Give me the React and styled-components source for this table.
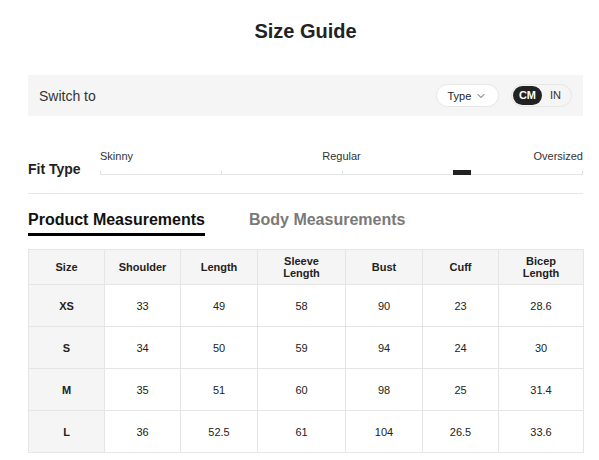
import React from 'react';
import styled, { createGlobalStyle } from 'styled-components';
import { ChevronDown } from 'lucide-react';

const GlobalStyle = createGlobalStyle`
  body {
    margin: 0;
    background: #fff;
    font-family: 'Liberation Sans', Arial, sans-serif;
    color: #222;
  }
`;

const Page = styled.div`
  width: 599px;
  box-sizing: border-box;
  padding: 0 16px 0 28px;
`;

const Title = styled.h2`
  margin: 0;
  padding-top: 19px;
  font-size: 20px;
  line-height: 24px;
  font-weight: 700;
  text-align: center;
  color: #222;
`;

const SwitchBar = styled.div`
  margin-top: 32px;
  height: 41px;
  background: #f5f5f5;
  display: flex;
  align-items: center;
  padding: 0 11px;
  gap: 12px;
`;

const SwitchLabel = styled.span`
  flex: 1;
  font-size: 14px;
  color: #333;
`;

const TypeButton = styled.button`
  height: 23px;
  width: 63px;
  box-sizing: border-box;
  border: 1px solid #e6e6e6;
  border-radius: 12px;
  background: #fff;
  display: flex;
  align-items: center;
  justify-content: center;
  gap: 4px;
  font-family: inherit;
  font-size: 11px;
  color: #222;
  padding: 0;
`;

const UnitToggle = styled.div`
  height: 23px;
  box-sizing: border-box;
  border: 1px solid #e6e6e6;
  border-radius: 12px;
  display: flex;
  align-items: center;
  padding: 0 10px 0 1px;
  gap: 8px;
`;

const Unit = styled.span`
  height: 19px;
  line-height: 19px;
  padding: 0 ${(p) => (p.active ? '6px' : '0')};
  border-radius: 10px;
  font-size: 11px;
  font-weight: ${(p) => (p.active ? 700 : 400)};
  background: ${(p) => (p.active ? '#222' : 'transparent')};
  color: ${(p) => (p.active ? '#fff' : '#333')};
`;

const FitSection = styled.div`
  display: flex;
  align-items: flex-end;
  padding: 34px 0 18px;
  border-bottom: 1px solid #e8e8e8;
`;

const FitLabel = styled.div`
  width: 72px;
  font-size: 14px;
  line-height: 16px;
  font-weight: 700;
  margin-bottom: -2px;
`;

const Slider = styled.div`
  flex: 1;
`;

const SliderLabels = styled.div`
  display: grid;
  grid-template-columns: 1fr 1fr 1fr;
  font-size: 11px;
  line-height: 13px;
  color: #333;

  span:nth-child(2) { text-align: center; }
  span:nth-child(3) { text-align: right; }
`;

const Track = styled.div`
  position: relative;
  height: 11px;
  border-bottom: 1px solid #e5e5e5;
`;

const Tick = styled.i`
  position: absolute;
  bottom: 0;
  width: 1px;
  height: 3px;
  background: #ddd;
`;

const Marker = styled.i`
  position: absolute;
  bottom: -1px;
  width: 18px;
  height: 5px;
  background: #222;
`;

const Tabs = styled.div`
  display: flex;
  gap: 44px;
  margin-top: 16px;
`;

const Tab = styled.div`
  font-size: 16px;
  line-height: 20px;
  font-weight: 700;
  padding-bottom: 3px;
  border-bottom: 3px solid ${(p) => (p.active ? '#000' : 'transparent')};
  color: ${(p) => (p.active ? '#111' : '#7a7a7a')};
`;

const Table = styled.table`
  margin-top: 13px;
  width: 555px;
  border-collapse: collapse;
  table-layout: fixed;
  font-size: 11px;
  text-align: center;
  color: #222;
`;

const Th = styled.th`
  height: 34px;
  padding: 0 4px;
  background: #f5f5f5;
  border: 1px solid #e5e5e5;
  font-weight: 700;
  line-height: 12px;
`;

const Td = styled.td`
  height: 41px;
  padding: 0;
  border: 1px solid #e5e5e5;
  background: ${(p) => (p.head ? '#f5f5f5' : '#fff')};
  font-weight: ${(p) => (p.head ? 700 : 400)};
`;

const columns = [
  { label: ['Size'], width: 76 },
  { label: ['Shoulder'], width: 76 },
  { label: ['Length'], width: 77 },
  { label: ['Sleeve', 'Length'], width: 88 },
  { label: ['Bust'], width: 77 },
  { label: ['Cuff'], width: 76 },
  { label: ['Bicep', 'Length'], width: 85 },
];

const rows = [
  ['XS', '33', '49', '58', '90', '23', '28.6'],
  ['S', '34', '50', '59', '94', '24', '30'],
  ['M', '35', '51', '60', '98', '25', '31.4'],
  ['L', '36', '52.5', '61', '104', '26.5', '33.6'],
];

const fitValue = 73;

const App = () => {
  return (
    <>
      <GlobalStyle />
      <Page>
        <Title>Size Guide</Title>

        <SwitchBar>
          <SwitchLabel>Switch to</SwitchLabel>
          <TypeButton>
            Type <ChevronDown size={12} strokeWidth={1.5} />
          </TypeButton>
          <UnitToggle>
            <Unit active>CM</Unit>
            <Unit>IN</Unit>
          </UnitToggle>
        </SwitchBar>

        <FitSection>
          <FitLabel>Fit Type</FitLabel>
          <Slider>
            <SliderLabels>
              <span>Skinny</span>
              <span>Regular</span>
              <span>Oversized</span>
            </SliderLabels>
            <Track>
              {[0, 25, 50, 75, 100].map((p) => (
                <Tick key={p} style={{ left: `calc(${p}% - ${p === 100 ? 1 : 0}px)` }} />
              ))}
              <Marker style={{ left: `${fitValue}%` }} />
            </Track>
          </Slider>
        </FitSection>

        <Tabs>
          <Tab active>Product Measurements</Tab>
          <Tab>Body Measurements</Tab>
        </Tabs>

        <Table>
          <colgroup>
            {columns.map((c) => (
              <col key={c.label.join()} style={{ width: c.width }} />
            ))}
          </colgroup>
          <thead>
            <tr>
              {columns.map((c) => (
                <Th key={c.label.join()}>
                  {c.label.map((line, i) => (
                    <React.Fragment key={line}>
                      {i > 0 && <br />}
                      {line}
                    </React.Fragment>
                  ))}
                </Th>
              ))}
            </tr>
          </thead>
          <tbody>
            {rows.map((r) => (
              <tr key={r[0]}>
                {r.map((v, i) => (
                  <Td key={i} head={i === 0}>{v}</Td>
                ))}
              </tr>
            ))}
          </tbody>
        </Table>
      </Page>
    </>
  );
};

export default App;
